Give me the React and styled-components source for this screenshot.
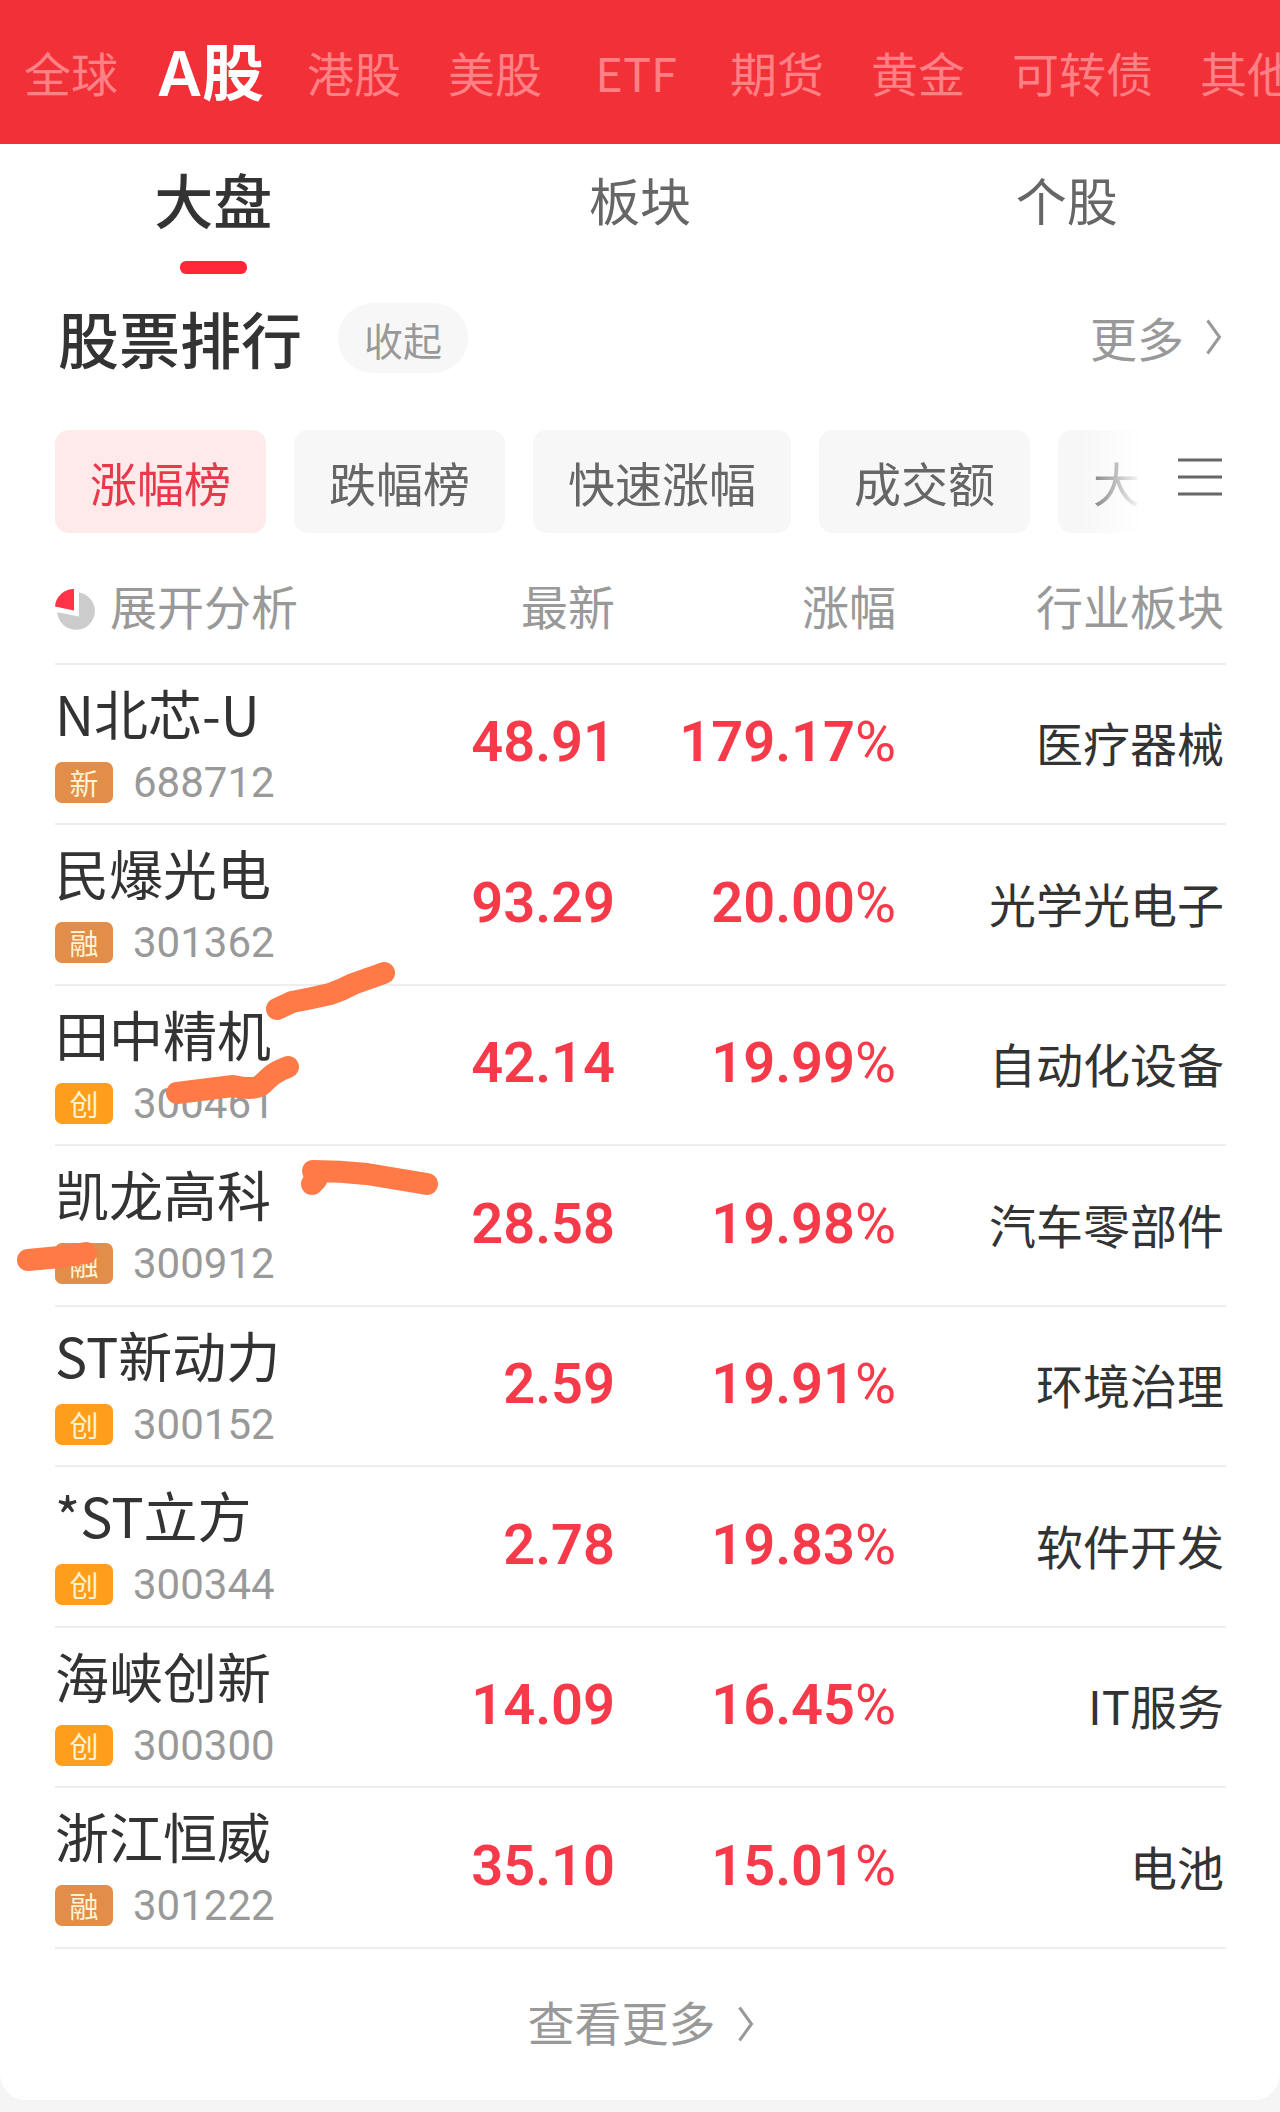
import React, { useState } from "react";
import styled, { createGlobalStyle } from "styled-components";

const GlobalStyle = createGlobalStyle`
  *, *::before, *::after { box-sizing: border-box; }
  body {
    margin: 0;
    background: #f5f5f5;
    color: #333;
    font-family: "Noto Sans CJK SC", "Noto Sans", sans-serif;
    overflow-x: hidden;
  }
  button {
    margin: 0;
    padding: 0;
    border: 0;
    background: none;
    font: inherit;
    color: inherit;
    cursor: pointer;
  }
  a { color: inherit; text-decoration: none; }
`;

const Page = styled.div`
  position: relative;
  overflow: hidden;
`;

const MarketNav = styled.nav`
  display: flex;
  align-items: center;
  gap: 47px;
  height: 144px;
  padding-left: 24px;
  overflow: hidden;
  background: #f23037;
`;

const MarketTab = styled.button`
  flex: none;
  min-width: 94px;
  margin: ${(p) => (p.$active ? "0 -4px 0 -8px" : "0")};
  padding-top: ${(p) => (p.$active ? 4 : 0)}px;
  font-family: ${(p) =>
    p.$active
      ? 'Inter, "Noto Sans CJK SC", sans-serif'
      : '"Noto Sans CJK SC", sans-serif'};
  font-size: ${(p) => (p.$active ? 62 : 47)}px;
  font-weight: ${(p) => (p.$active ? 600 : 400)};
  line-height: 72px;
  white-space: nowrap;
  color: ${(p) => (p.$active ? "#fff" : "#ff8085")};
`;

const Card = styled.main`
  padding-bottom: 9px;
  background: #fff;
  border-radius: 0 0 26px 26px;
`;

const SubTabs = styled.div`
  display: grid;
  grid-template-columns: repeat(3, 1fr);
`;

const SubTab = styled.button`
  display: flex;
  flex-direction: column;
  align-items: center;
  gap: 7px;
  font-size: ${(p) => (p.$active ? 59 : 51)}px;
  font-weight: ${(p) => (p.$active ? 500 : 400)};
  line-height: 110px;
  color: ${(p) => (p.$active ? "#333" : "#666")};
`;

const Indicator = styled.span`
  width: 67px;
  height: 13px;
  border-radius: 6px;
  background: ${(p) => (p.$active ? "#ff2638" : "transparent")};
`;

const Section = styled.section`
  padding: 29px 54px 0 55px;
`;

const SectionHead = styled.div`
  display: flex;
  align-items: center;
  height: 70px;
`;

const Title = styled.h2`
  margin: 0;
  padding-left: 3px;
  font-size: 61px;
  font-weight: 500;
  line-height: 66px;
`;

const Collapse = styled.button`
  height: 70px;
  margin-left: 36px;
  padding: 2px 26px 0;
  border-radius: 35px;
  background: #f7f7f7;
  font-size: 39px;
  line-height: 68px;
  color: #999;
`;

const MoreLink = styled.a`
  display: flex;
  align-items: center;
  gap: 22px;
  margin-left: auto;
  padding: 0 4px 3px 0;
  font-size: 47px;
  line-height: 66px;
  color: #999;
`;

const FilterBar = styled.div`
  display: flex;
  justify-content: space-between;
  margin-top: 57px;
`;

const Chips = styled.div`
  display: flex;
  gap: 28px;
  flex: 0 1 1088px;
  min-width: 0;
  overflow-x: auto;
  scrollbar-width: none;
  mask-image: linear-gradient(to right, #000 calc(100% - 64px), transparent);
`;

const Chip = styled.button`
  flex: none;
  height: 103px;
  padding: 0 35px;
  border-radius: 14px;
  background: ${(p) => (p.$active ? "#ffeaeb" : "#f7f7f7")};
  font-size: 47px;
  line-height: 103px;
  white-space: nowrap;
  color: ${(p) => (p.$active ? "#e8384a" : "#666")};
`;

const MenuButton = styled.button`
  display: flex;
  flex: none;
  align-items: center;
  padding: 0 4px 10px 32px;
`;

const Table = styled.table`
  width: 100%;
  table-layout: fixed;
  border-collapse: separate;
  border-spacing: 0;
`;

const HeadCell = styled.th`
  width: ${(p) => p.$width};
  height: 132px;
  padding: 14px 2px 0 0;
  border-bottom: 2px solid #eee;
  text-align: ${(p) => p.$align || "right"};
  font-size: 47px;
  font-weight: 400;
  line-height: 66px;
  white-space: nowrap;
  color: #999;
`;

const Analysis = styled.button`
  display: flex;
  align-items: center;
  gap: 14px;

  svg { margin-top: 10px; }
`;

const Row = styled.tr`
  height: 160px;
  &:nth-child(even) { height: 161px; }
`;

const Cell = styled.td`
  padding: 0 2px 4px 0;
  border-bottom: 2px solid #eee;
  text-align: right;
  vertical-align: middle;
  white-space: nowrap;
`;

const StockCell = styled(Cell)`
  padding: 18px 0 0;
  text-align: left;
  vertical-align: top;
`;

const StockName = styled.a`
  display: block;
  font-size: 54px;
  line-height: 60px;
`;

const StockMeta = styled.div`
  display: flex;
  align-items: center;
  gap: 20px;
  margin-top: 19px;
`;

const Badge = styled.span`
  width: 58px;
  height: 41px;
  border-radius: 7px;
  background: ${(p) => (p.$kind === "创" ? "#ff9d1c" : "#e28d49")};
  text-align: center;
  font-size: 29px;
  line-height: 41px;
  color: #fff3d2;
`;

const Code = styled.span`
  font-family: Roboto, sans-serif;
  font-size: 42px;
  line-height: 41px;
  color: #999;
`;

const Figure = styled.span`
  font-family: Roboto, sans-serif;
  font-size: 56px;
  font-weight: 600;
  line-height: 66px;
  color: #f63a4a;
`;

const Percent = styled.span`
  font-weight: 400;
`;

const Industry = styled.span`
  font-size: 47px;
  line-height: 66px;
`;

const ViewMore = styled.a`
  display: flex;
  align-items: center;
  justify-content: center;
  gap: 22px;
  height: 142px;
  font-size: 47px;
  color: #999;

  svg { margin-top: 8px; }
`;

const Scribbles = styled.svg`
  position: absolute;
  top: 950px;
  left: 0;
  pointer-events: none;
`;

const Chevron = () => (
  <svg width="16" height="36" viewBox="0 0 16 36" fill="none" stroke="#999" strokeWidth="3" aria-hidden="true">
    <path d="M1.5 1.5 13.5 18 1.5 34.5" />
  </svg>
);

const MenuIcon = () => (
  <svg width="44" height="38" viewBox="0 0 44 38" stroke="#666" strokeWidth="3" aria-hidden="true">
    <path d="M0 2h44M0 19h44M0 36h44" />
  </svg>
);

const PieIcon = () => (
  <svg width="41" height="42" viewBox="0 0 41 42" aria-hidden="true">
    <path d="M24 3.5A18.8 18.8 0 1 1 2.3 23.3L24 27.5Z" fill="#ccc" />
    <path d="M19 0v21.5L0 17.5A19 19 0 0 1 19 0Z" fill="#ff3347" />
  </svg>
);

const markets = ["全球", "A股", "港股", "美股", "ETF", "期货", "黄金", "可转债", "其他"];
const subTabs = ["大盘", "板块", "个股"];
const filters = ["涨幅榜", "跌幅榜", "快速涨幅", "成交额", "大单"];
const stocks = [
  ["N北芯-U", "新", "688712", "48.91", "179.17", "医疗器械"],
  ["民爆光电", "融", "301362", "93.29", "20.00", "光学光电子"],
  ["田中精机", "创", "300461", "42.14", "19.99", "自动化设备"],
  ["凯龙高科", "融", "300912", "28.58", "19.98", "汽车零部件"],
  ["ST新动力", "创", "300152", "2.59", "19.91", "环境治理"],
  ["*ST立方", "创", "300344", "2.78", "19.83", "软件开发"],
  ["海峡创新", "创", "300300", "14.09", "16.45", "IT服务"],
  ["浙江恒威", "融", "301222", "35.10", "15.01", "电池"],
];

export default function App() {
  const [market, setMarket] = useState("A股");
  const [tab, setTab] = useState("大盘");
  const [filter, setFilter] = useState("涨幅榜");

  return (
    <Page>
      <GlobalStyle />
      <MarketNav>
        {markets.map((m) => (
          <MarketTab key={m} $active={m === market} onClick={() => setMarket(m)}>
            {m}
          </MarketTab>
        ))}
      </MarketNav>
      <Card>
        <SubTabs>
          {subTabs.map((t) => (
            <SubTab key={t} $active={t === tab} onClick={() => setTab(t)}>
              {t}
              <Indicator $active={t === tab} />
            </SubTab>
          ))}
        </SubTabs>
        <Section>
          <SectionHead>
            <Title>股票排行</Title>
            <Collapse>收起</Collapse>
            <MoreLink href="#more">
              更多
              <Chevron />
            </MoreLink>
          </SectionHead>
          <FilterBar>
            <Chips>
              {filters.map((f) => (
                <Chip key={f} $active={f === filter} onClick={() => setFilter(f)}>
                  {f}
                </Chip>
              ))}
            </Chips>
            <MenuButton aria-label="菜单">
              <MenuIcon />
            </MenuButton>
          </FilterBar>
          <Table>
            <thead>
              <tr>
                <HeadCell $width="24%" $align="left">
                  <Analysis>
                    <PieIcon />
                    展开分析
                  </Analysis>
                </HeadCell>
                <HeadCell $width="24%">最新</HeadCell>
                <HeadCell $width="24%">涨幅</HeadCell>
                <HeadCell $width="28%">行业板块</HeadCell>
              </tr>
            </thead>
            <tbody>
              {stocks.map(([name, kind, code, price, change, industry]) => (
                <Row key={code}>
                  <StockCell>
                    <StockName href={`#${code}`}>{name}</StockName>
                    <StockMeta>
                      <Badge $kind={kind}>{kind}</Badge>
                      <Code>{code}</Code>
                    </StockMeta>
                  </StockCell>
                  <Cell>
                    <Figure>{price}</Figure>
                  </Cell>
                  <Cell>
                    <Figure>
                      {change}
                      <Percent>%</Percent>
                    </Figure>
                  </Cell>
                  <Cell>
                    <Industry>{industry}</Industry>
                  </Cell>
                </Row>
              ))}
            </tbody>
          </Table>
          <ViewMore href="#all">
            查看更多
            <Chevron />
          </ViewMore>
        </Section>
      </Card>
      <Scribbles
        width="460"
        height="330"
        viewBox="0 950 460 330"
        fill="none"
        stroke="#ff7a47"
        strokeWidth="22"
        strokeLinecap="round"
        strokeLinejoin="round"
        aria-hidden="true"
      >
        <path d="M277 1009 292 1002 312 998 330 994 Q342 990 353 984 L384 973" />
        <path d="M177 1093 233 1086 Q252 1090 260 1086 C268 1080 269 1074 288 1067" />
        <path d="M312 1184 316 1180 313 1171 Q340 1171 367 1174 L427 1184" />
        <path d="M28 1260 60 1257 86 1253" />
      </Scribbles>
    </Page>
  );
}
